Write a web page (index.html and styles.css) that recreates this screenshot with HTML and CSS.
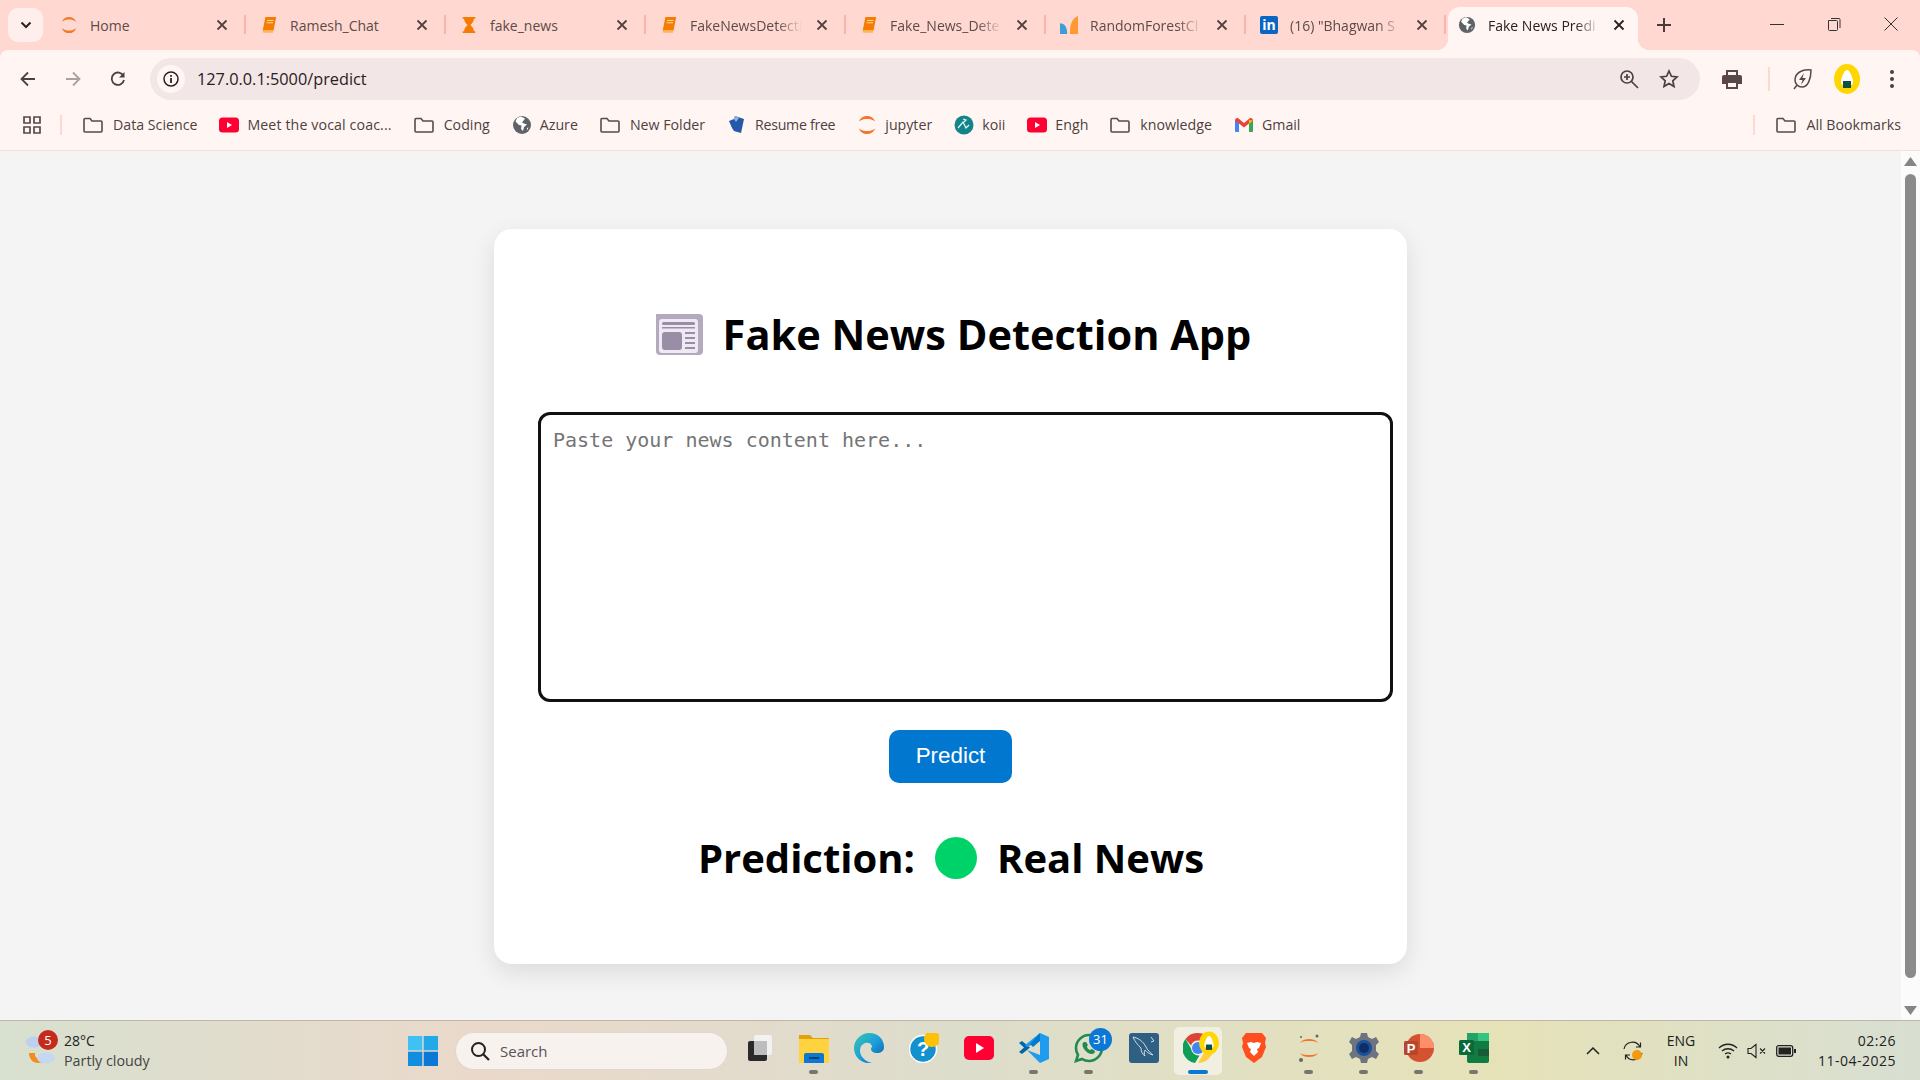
FILE: index.html
```html
<!DOCTYPE html>
<html>
<head>
  <meta charset="utf-8" />
  <title>Fake News Prediction</title>
  <link rel="stylesheet" href="styles.css">
</head>
<body>
  <svg class="defs" width="0" height="0">
    <symbol id="i-jupyter" viewBox="0 0 20 20">
      <path fill="#f37726" d="M2 6.500C3.500 2.500 6.500 1 10 1s6.500 1.500 8 5.500C15.500 4.500 13 4 10 4S4.500 4.500 2 6.500zM2 13.500C4.500 15.500 7 16 10 16s5.500-.5 8-2.500C16.500 17.500 13.500 19 10 19s-6.500-1.500-8-5.500z"/>
    </symbol>
    <symbol id="i-book" viewBox="0 0 20 20">
      <path fill="#f57c00" d="M6 1h12l-3 15H3z"/>
      <path fill="#ffb74d" d="M3 16h12l-.5 2.500H4a2 2 0 0 1-1-2.500z"/>
      <path fill="#ffd9a8" d="M8 4.500h7l-.2 1H7.800zM7.500 7h7l-.2 1h-7z"/>
    </symbol>
    <symbol id="i-hourglass" viewBox="0 0 20 20">
      <path fill="#f57c00" d="M3 1h14v2h-1.500c0 3-2 5-4 7 2 2 4 4 4 7H17v2H3v-2h1.500c0-3 2-5 4-7-2-2-4-4-4-7H3z"/>
    </symbol>
    <symbol id="i-forest" viewBox="0 0 20 20">
      <path fill="#3b9fd6" d="M0 8c5 0 8 4 8 12H0z"/>
      <path fill="#ff9a32" d="M20 0v20h-9c0-8 1-17 9-20z"/>
    </symbol>
    <symbol id="i-globe" viewBox="0 0 20 20">
      <circle cx="10" cy="10" r="9" fill="#5f6368"/>
      <path fill="#fff" d="M9 1.500 5 3 3.500 6.500 7 10l2.500.5L9 14l2 2 1-4 3-2.500-3-1-2-1 2-2.500 1-1.500zM15 13l1.500-.5L15 15.500z"/>
    </symbol>
    <symbol id="i-yt" viewBox="0 0 20 20">
      <rect y="2.500" width="20" height="15" rx="3.500" fill="#ff0033"/>
      <path fill="#fff" d="M8 7l5 3-5 3z"/>
    </symbol>
    <symbol id="i-folder" viewBox="0 0 20 20">
      <path fill="none" stroke="#5a4a48" stroke-width="1.600" d="M1 4.500a1 1 0 0 1 1-1h5l2 2.500h9a1 1 0 0 1 1 1v9a1 1 0 0 1-1 1H2a1 1 0 0 1-1-1z"/>
    </symbol>
    <symbol id="i-resume" viewBox="0 0 20 20">
      <path fill="#2458a8" d="M2 6l5-2 1-3 9 3-3 14-7-2-2-3z"/>
      <path fill="#8fb0e0" d="M8 1l-1 3 2 3 3-4z"/>
    </symbol>
    <symbol id="i-koii" viewBox="0 0 20 20">
      <circle cx="10" cy="10" r="9.500" fill="#12848a"/>
      <path fill="none" stroke="#e6fbfb" stroke-width="1.200" d="M4 13l5-6 3 6 3-3M9 4l3 1-2 2"/>
    </symbol>
    <symbol id="i-gmail" viewBox="0 0 20 20">
      <path fill="#4285f4" d="M1 5h4v12H2a1 1 0 0 1-1-1z"/>
      <path fill="#34a853" d="M15 5h4v11a1 1 0 0 1-1 1h-3z"/>
      <path fill="#ea4335" d="M1 5.500C1 3.500 3 2.500 4.500 3.500L10 8l5.500-4.500c1.500-1 3.500 0 3.500 2l-4 3-5 4-5-4-4-3z"/>
      <path fill="#fbbc04" d="M15 5l4 .5-4 3.500z"/>
    </symbol>
    <symbol id="i-close" viewBox="0 0 12 12">
      <path fill="none" stroke="currentColor" stroke-width="1.800" d="M1.500 1.500l9 9M10.500 1.500l-9 9"/>
    </symbol>
    <symbol id="i-onigiri" viewBox="0 0 26 30">
      <ellipse cx="13" cy="15" rx="13" ry="15" fill="#ffd600"/>
      <path fill="#fff" d="M13 6c2 0 3 2 5 7s2 9-5 9-7-4-5-9 3-7 5-7z"/>
      <rect x="9" y="17" width="8" height="7" fill="#0f4f48"/>
    </symbol>
  </svg>

  <div class="tabstrip">
    <button class="tab-menu">
      <svg width="12" height="8" viewBox="0 0 12 8"><path fill="none" stroke="#2b2020" stroke-width="2" d="M1.500 1.500 6 6l4.500-4.500"/></svg>
    </button>
    <div class="tab"><svg class="fav"><use href="#i-jupyter"/></svg><span class="tab-title">Home</span><svg class="tab-x"><use href="#i-close"/></svg></div>
    <div class="tab"><svg class="fav"><use href="#i-book"/></svg><span class="tab-title">Ramesh_Chat</span><svg class="tab-x"><use href="#i-close"/></svg></div>
    <div class="tab"><svg class="fav"><use href="#i-hourglass"/></svg><span class="tab-title">fake_news</span><svg class="tab-x"><use href="#i-close"/></svg></div>
    <div class="tab"><svg class="fav"><use href="#i-book"/></svg><span class="tab-title fade">FakeNewsDetecti</span><svg class="tab-x"><use href="#i-close"/></svg></div>
    <div class="tab"><svg class="fav"><use href="#i-book"/></svg><span class="tab-title fade">Fake_News_Dete</span><svg class="tab-x"><use href="#i-close"/></svg></div>
    <div class="tab"><svg class="fav"><use href="#i-forest"/></svg><span class="tab-title fade">RandomForestCl</span><svg class="tab-x"><use href="#i-close"/></svg></div>
    <div class="tab"><span class="fav linkedin">in</span><span class="tab-title fade">(16) "Bhagwan S</span><svg class="tab-x"><use href="#i-close"/></svg></div>
    <div class="tab active"><svg class="fav"><use href="#i-globe"/></svg><span class="tab-title fade">Fake News Predi</span><svg class="tab-x"><use href="#i-close"/></svg></div>
    <svg class="new-tab" width="14" height="14" viewBox="0 0 14 14"><path fill="none" stroke="#4a3a38" stroke-width="2" d="M7 0v14M0 7h14"/></svg>
    <div class="win-btns">
      <div class="win-btn"><svg width="14" height="14" viewBox="0 0 14 14"><path stroke="#333" d="M0 7.500h14"/></svg></div>
      <div class="win-btn"><svg width="14" height="14" viewBox="0 0 14 14"><path fill="none" stroke="#333" d="M1.500 3.500h8a1 1 0 0 1 1 1v8a1 1 0 0 1-1 1h-7a1 1 0 0 1-1-1zM4 1.500h8a1 1 0 0 1 1 1V11"/></svg></div>
      <div class="win-btn"><svg width="14" height="14" viewBox="0 0 14 14"><path stroke="#333" d="M.5.500l13 13M13.500.500l-13 13"/></svg></div>
    </div>
  </div>

  <div class="toolbar">
    <div class="tool-btn"><svg width="16" height="16" viewBox="0 0 16 16"><path fill="none" stroke="#4f3f3d" stroke-width="1.800" d="M15 8H2M8 1.500 1.500 8 8 14.500"/></svg></div>
    <div class="tool-btn"><svg width="16" height="16" viewBox="0 0 16 16"><path fill="none" stroke="#ad9f9d" stroke-width="1.800" d="M1 8h13M8 1.500 14.500 8 8 14.500"/></svg></div>
    <div class="tool-btn"><svg width="16" height="16" viewBox="0 0 16 16"><path fill="none" stroke="#4f3f3d" stroke-width="1.800" d="M13.500 5A6.200 6.200 0 1 0 14 9"/><path fill="#4f3f3d" d="M14.500 1v5.500H9z"/></svg></div>
    <div class="urlbar">
      <div class="site-info"><svg width="16" height="16" viewBox="0 0 16 16"><circle cx="8" cy="8" r="7" fill="none" stroke="#2b2020" stroke-width="1.500"/><path stroke="#2b2020" stroke-width="1.800" d="M8 7v5M8 4v1.800"/></svg></div>
      <span class="url-text">127.0.0.1:5000/predict</span>
      <svg class="url-zoom" width="20" height="20" viewBox="0 0 20 20"><circle cx="8" cy="8" r="6" fill="none" stroke="#4f3f3d" stroke-width="1.700"/><path stroke="#4f3f3d" stroke-width="1.700" d="M12.500 12.500 19 19M8 5v6M5 8h6"/></svg>
      <svg class="url-star" width="20" height="20" viewBox="0 0 20 20"><path fill="none" stroke="#4f3f3d" stroke-width="1.700" d="M10 2l2.400 5.300 5.600.6-4.200 3.900 1.200 5.700L10 14.600 5 17.500l1.200-5.700L2 7.900l5.600-.6z"/></svg>
    </div>
    <div class="tool-btn print"><svg width="22" height="20" viewBox="0 0 22 20"><path fill="#5a4846" d="M5 1h12v5h-2V3H7v3H5zM3 6h16a2 2 0 0 1 2 2v7h-4v-2H5v2H1V8a2 2 0 0 1 2-2z"/><path fill="none" stroke="#5a4846" stroke-width="2" d="M6 13h10v6H6z"/></svg></div>
    <div class="tool-sep"></div>
    <div class="tool-btn"><svg width="20" height="22" viewBox="0 0 20 22"><path fill="none" stroke="#5a4846" stroke-width="1.500" d="M19 2C10 1 3 5 3 12c0 4 3 7 7 7 6 0 9-8 9-17zM5 17l-3 4"/><path fill="#5a4846" d="M12 5 7 12h3.500L9 17l5-7h-3.500z"/></svg></div>
    <div class="tool-btn"><svg width="26" height="30"><use href="#i-onigiri"/></svg></div>
    <div class="tool-btn"><svg width="4" height="20" viewBox="0 0 4 20"><circle cx="2" cy="3" r="2" fill="#4f3f3d"/><circle cx="2" cy="10" r="2" fill="#4f3f3d"/><circle cx="2" cy="17" r="2" fill="#4f3f3d"/></svg></div>
  </div>

  <div class="bookmarks">
    <svg class="apps" width="20" height="18" viewBox="0 0 20 18"><path fill="none" stroke="#5a4846" stroke-width="1.700" d="M2 1h6v6H2zM12 1h6v6h-6zM2 11h6v6H2zM12 11h6v6h-6z"/></svg>
    <div class="bm-sep"></div>
    <div class="bm folder"><svg class="bm-ico"><use href="#i-folder"/></svg>Data Science</div>
    <div class="bm loose"><svg class="bm-ico"><use href="#i-yt"/></svg>Meet the vocal coac...</div>
    <div class="bm folder"><svg class="bm-ico"><use href="#i-folder"/></svg>Coding</div>
    <div class="bm"><svg class="bm-ico"><use href="#i-globe"/></svg>Azure</div>
    <div class="bm folder"><svg class="bm-ico"><use href="#i-folder"/></svg>New Folder</div>
    <div class="bm tight"><svg class="bm-ico"><use href="#i-resume"/></svg>Resume free</div>
    <div class="bm"><svg class="bm-ico"><use href="#i-jupyter"/></svg>jupyter</div>
    <div class="bm"><svg class="bm-ico"><use href="#i-koii"/></svg>koii</div>
    <div class="bm"><svg class="bm-ico"><use href="#i-yt"/></svg>Engh</div>
    <div class="bm folder"><svg class="bm-ico"><use href="#i-folder"/></svg>knowledge</div>
    <div class="bm"><svg class="bm-ico"><use href="#i-gmail"/></svg>Gmail</div>
    <div class="bm-all">
      <div class="bm-sep"></div>
      <div class="bm folder"><svg class="bm-ico"><use href="#i-folder"/></svg>All Bookmarks</div>
    </div>
  </div>

  <div class="viewport">
    <main class="page">
      <div class="card">
        <h1 class="title">
          <svg class="news-ico" viewBox="0 0 47 41">
            <path fill="#b5a9bd" d="M4 0h39a4 4 0 0 1 4 4v33a4 4 0 0 1-4 4H4a4 4 0 0 1-4-4V8a4 4 0 0 1 4-8z"/>
            <rect x="3" y="5" width="39" height="34" rx="3" fill="#efe9f3"/>
            <rect x="6" y="8" width="33" height="3" rx="1.500" fill="#9a8ea6"/>
            <rect x="6" y="13" width="33" height="1.500" fill="#9a8ea6"/>
            <rect x="6" y="18" width="20" height="18" rx="3" fill="#9a8ea6"/>
            <path stroke="#9a8ea6" stroke-width="2" d="M29 19h10M29 24h10M29 29h10M29 34h10"/>
          </svg>
          <span>Fake News Detection App</span>
        </h1>
        <textarea class="news-input" placeholder="Paste your news content here..."></textarea>
        <button class="predict-btn">Predict</button>
        <h2 class="result">
          <span>Prediction:</span>
          <span class="dot"></span>
          <span>Real News</span>
        </h2>
      </div>
    </main>
    <div class="scrollbar">
      <svg width="13" height="9" viewBox="0 0 13 9"><path fill="#858585" d="M6.500 0 13 9H0z"/></svg>
      <div class="thumb"></div>
      <svg width="13" height="9" viewBox="0 0 13 9"><path fill="#858585" d="M6.500 9 0 0h13z"/></svg>
    </div>
  </div>

  <div class="taskbar">
    <div class="weather">
      <div class="weather-ico">
        <svg width="30" height="34" viewBox="0 0 30 34">
          <ellipse cx="8" cy="8" rx="8" ry="5.500" fill="#bcd0ef"/>
          <path fill="#f28c1e" d="M3 19c0 6 4 10 9 10 3 0 6-1 7-4-6 1-11-1-10-6z"/>
          <ellipse cx="20" cy="24" rx="9" ry="5.500" fill="#c6d7f2"/>
        </svg>
        <span class="weather-badge">5</span>
      </div>
      <div class="weather-text">
        <div class="temp">28°C</div>
        <div class="cond">Partly cloudy</div>
      </div>
    </div>

    <div class="start">
      <svg width="30" height="30" viewBox="0 0 30 30">
        <rect width="14.300" height="14.300" fill="#3fc1f3"/>
        <rect x="15.700" width="14.300" height="14.300" fill="#23a8ea"/>
        <rect y="15.700" width="14.300" height="14.300" fill="#138ede"/>
        <rect x="15.700" y="15.700" width="14.300" height="14.300" fill="#0a78d4"/>
      </svg>
    </div>
    <div class="search">
      <svg width="20" height="20" viewBox="0 0 20 20"><circle cx="8.500" cy="8.500" r="6.500" fill="none" stroke="#222" stroke-width="2"/><path stroke="#222" stroke-width="2.200" d="M13 13l6 6"/></svg>
      <span>Search</span>
    </div>

    <div class="task-item">
      <svg class="app" viewBox="0 0 30 30">
        <rect x="10" y="2" width="18" height="20" rx="2" fill="#f2f2f2"/>
        <rect x="4" y="8" width="19" height="20" rx="2" fill="#2a2a2a"/>
        <rect x="10" y="8" width="13" height="14" fill="#bdbdbd"/>
      </svg>
    </div>
    <div class="task-item open">
      <svg class="app" viewBox="0 0 30 30">
        <path fill="#e3a008" d="M0 2h11l3 3h16v6H0z"/>
        <rect y="6" width="30" height="24" fill="#ffd23f"/>
        <path fill="#0a78d4" d="M5 22a2 2 0 0 1 2-2h16a2 2 0 0 1 2 2v8H5z"/>
        <rect x="10" y="24" width="10" height="2" fill="#05406f"/>
      </svg>
      <i class="pill"></i>
    </div>
    <div class="task-item">
      <svg class="app" viewBox="0 0 30 30">
        <defs>
          <linearGradient id="edge" x1="0" y1="0" x2="1" y2="1"><stop offset="0" stop-color="#3ac6a8"/><stop offset=".5" stop-color="#1ba0dc"/><stop offset="1" stop-color="#0c59a4"/></linearGradient>
        </defs>
        <path fill="url(#edge)" d="M15 0c9 0 15 6 15 14 0 4-3 6-7 6-4 0-6-2-6-4 0-1 1-2 1-3-1-3-4-4-7-3-5 2-6 7-4 12 2 4 6 7 11 8-1 0-2 0-3 0C6 30 0 23 0 15S7 0 15 0z"/>
      </svg>
    </div>
    <div class="task-item">
      <svg class="app" viewBox="0 0 30 30">
        <circle cx="14" cy="16" r="13.500" fill="#1391cf" stroke="#fff" stroke-width="1.500"/>
        <text x="14" y="23" text-anchor="middle" class="help-q">?</text>
        <circle cx="23" cy="6" r="8" fill="#ffc107"/>
      </svg>
    </div>
    <div class="task-item">
      <svg class="app" viewBox="0 0 30 30"><rect y="3" width="30" height="24" rx="5" fill="#ff0033"/><path fill="#fff" d="M12 10l8 5-8 5z"/></svg>
    </div>
    <div class="task-item open">
      <svg class="app" viewBox="0 0 30 30">
        <path fill="#0065a9" d="M0 10l3-2 8 6.500L8 17l-5 4-3-2 5-4.500z"/>
        <path fill="#1f9cf0" d="M21 0l9 4v22l-9 4-13-13L21 22V8L8 14 6 12z"/>
        <path fill="#007acc" d="M21 0l-10 11 3 3 7-6z"/>
      </svg>
      <i class="pill"></i>
    </div>
    <div class="task-item open">
      <svg class="app" viewBox="0 0 30 30">
        <path fill="none" stroke="#1f8a53" stroke-width="2.600" d="M15 2C8 2 2 8 2 15c0 2.500.7 5 2 7l-2 6 6-2c2 1.300 4.500 2 7 2 7 0 13-6 13-13S22 2 15 2z"/>
        <path fill="#1f8a53" d="M10 9c-2 1-2 4 0 7s5 5 8 5c2 0 3-2 3-3l-3-2-2 1c-2-1-3-2-3-4l1-1-2-3z"/>
      </svg>
      <span class="app-badge">31</span>
      <i class="pill"></i>
    </div>
    <div class="task-item">
      <svg class="app" viewBox="0 0 30 30">
        <rect width="30" height="30" rx="3" fill="#2f5f83"/>
        <path fill="none" stroke="#cfdce6" stroke-width="1" d="M4 4c5 1 10 4 13 10 2 4 5 6 7 8-4-1-6-3-8-5-1 2-1 4 0 6-3-2-4-5-4-8-3-3-6-6-8-11zM22 4l3 4-3 1"/>
      </svg>
    </div>
    <div class="task-item current">
      <svg class="app" viewBox="0 0 30 30">
        <path fill="#db4437" d="M15 0a15 15 0 0 1 13 7.500H15a7.500 7.500 0 0 0-7 5L2.500 6A15 15 0 0 1 15 0z"/>
        <path fill="#0f9d58" d="M2.500 6 8 15.500a7.500 7.500 0 0 0 8.500 7L12 30A15 15 0 0 1 2.500 6z"/>
        <path fill="#ffcd40" d="M28 7.500A15 15 0 0 1 15 30l6.500-11a7.500 7.500 0 0 0 0-11.500z"/>
        <circle cx="15" cy="15" r="6" fill="#4285f4"/>
      </svg>
      <svg class="app-avatar"><use href="#i-onigiri"/></svg>
      <i class="pill"></i>
    </div>
    <div class="task-item">
      <svg class="app" viewBox="0 0 30 30">
        <path fill="#ff4f1f" d="M7 0h16l4 5-1 5 1 4-4 10-8 6-8-6L3 14l1-4-1-5z"/>
        <path fill="#fff" d="M8 10l4-1 3 1 3-1 4 1-2 5-2 1 1 3-4 4-4-4 1-3-2-1z"/>
      </svg>
    </div>
    <div class="task-item open">
      <svg class="app" viewBox="0 0 30 30">
        <path fill="#f37726" d="M6 10c2-3 5-4 9-4s7 1 9 4c-3-2-6-2-9-2s-6 0-9 2zM6 20c3 2 6 2 9 2s6 0 9-2c-2 3-5 4-9 4s-7-1-9-4z"/>
        <circle cx="23" cy="3" r="1.500" fill="#666"/><circle cx="7" cy="4" r="1" fill="#666"/><circle cx="7" cy="27" r="2" fill="#666"/>
      </svg>
      <i class="pill"></i>
    </div>
    <div class="task-item open">
      <svg class="app" viewBox="0 0 30 30">
        <path fill="#6d7480" d="M12 0h6l1 4 4 2 4-2 3 5-3 3v6l3 3-3 5-4-2-4 2-1 4h-6l-1-4-4-2-4 2-3-5 3-3v-6L0 9l3-5 4 2 4-2z"/>
        <circle cx="15" cy="15" r="8" fill="#1c4f9c"/><circle cx="15" cy="15" r="5" fill="#0e2f66"/>
      </svg>
      <i class="pill"></i>
    </div>
    <div class="task-item open">
      <svg class="app" viewBox="0 0 30 30">
        <circle cx="16" cy="15" r="14" fill="#d35230"/>
        <path fill="#ff8f6b" d="M16 1a14 14 0 0 1 14 14H16z"/>
        <rect y="8" width="14" height="14" rx="1.500" fill="#b7472a"/>
        <text x="7" y="20" text-anchor="middle" class="tile-letter">P</text>
      </svg>
      <i class="pill"></i>
    </div>
    <div class="task-item open">
      <svg class="app" viewBox="0 0 30 30">
        <rect x="8" width="22" height="30" rx="2" fill="#107c41"/>
        <rect x="19" width="11" height="8" fill="#33c481"/>
        <rect x="8" width="11" height="8" fill="#21a366"/>
        <rect x="19" y="16" width="11" height="7" fill="#185c37"/>
        <rect y="7" width="15" height="15" rx="1.500" fill="#0b6a3a"/>
        <text x="7.500" y="19" text-anchor="middle" class="tile-letter">X</text>
      </svg>
      <i class="pill"></i>
    </div>

    <div class="tray">
      <div class="tray-chevron"><svg width="14" height="8" viewBox="0 0 14 8"><path fill="none" stroke="#222" stroke-width="1.500" d="M1 7l6-6 6 6"/></svg></div>
      <div class="tray-sync">
        <svg width="22" height="22" viewBox="0 0 22 22"><path fill="none" stroke="#222" stroke-width="1.200" d="M2 9a8.500 8.500 0 0 1 16-2M20 13a8.500 8.500 0 0 1-16 2M18.500 2.500V7H14M3.500 19.500V15H8"/><circle cx="15" cy="15" r="5" fill="#f59a0c"/></svg>
      </div>
      <div class="tray-lang">ENG<br>IN</div>
      <div class="tray-ico"><svg width="20" height="16" viewBox="0 0 20 16"><path fill="none" stroke="#222" stroke-width="1.300" d="M1 5c5-5 13-5 18 0M4 8c3.500-3 8.500-3 12 0M7 11c2-1.500 4-1.500 6 0"/><circle cx="10" cy="14" r="1.500" fill="#222"/></svg></div>
      <div class="tray-ico"><svg width="20" height="16" viewBox="0 0 20 16"><path fill="none" stroke="#222" stroke-width="1.100" d="M1 5.500h3L9 1.500v13L4 10.500H1zM13 5.500l5 5M18 5.500l-5 5"/></svg></div>
      <div class="tray-ico"><svg width="20" height="12" viewBox="0 0 20 12"><rect x=".7" y=".7" width="16" height="10.600" rx="2" fill="none" stroke="#222" stroke-width="1.300"/><rect x="2.500" y="2.500" width="12.500" height="7" fill="#222"/><rect x="18" y="4" width="2" height="4" fill="#222"/></svg></div>
      <div class="tray-clock">02:26<br>11-04-2025</div>
    </div>
  </div>
</body>
</html>
```

FILE: styles.css
```css
* {
  box-sizing: border-box;
}

html, body {
  margin: 0;
  height: 1080px;
  overflow: hidden;
}

body {
  font-family: "Open Sans", "Noto Sans", sans-serif;
  background-color: #ffd8d2;
  color: #000;
  display: flex;
  flex-direction: column;
}

.defs {
  position: absolute;
}

/* tab strip */
.tabstrip {
  height: 50px;
  background-color: #ffd8d2;
  display: flex;
  align-items: flex-end;
  flex-shrink: 0;
}

.tab-menu {
  width: 35px;
  height: 34px;
  margin: 0 3px 8px 8px;
  padding: 0;
  border: 0;
  border-radius: 10px;
  background-color: #ffefec;
  display: flex;
  align-items: center;
  justify-content: center;
}

.tab {
  width: 200px;
  height: 42px;
  padding: 0 0 8px 14px;
  display: flex;
  align-items: center;
  color: #5e4a48;
  font-size: 14px;
  position: relative;
}

.tab::after {
  content: "";
  position: absolute;
  right: 0;
  top: 7px;
  height: 19px;
  width: 2px;
  background-color: #fbb4aa;
}

.fav {
  width: 18px;
  height: 18px;
  flex-shrink: 0;
  margin-right: 12px;
}

.linkedin {
  background-color: #0a66c2;
  border-radius: 2px;
  color: #fff;
  font-weight: 700;
  font-size: 14px;
  line-height: 18px;
  text-align: center;
}

.tab-title {
  width: 112px;
  white-space: nowrap;
  overflow: hidden;
}

.tab-title.fade {
  -webkit-mask-image: linear-gradient(to right, #000 78%, transparent 100%);
  mask-image: linear-gradient(to right, #000 78%, transparent 100%);
}

.tab-x {
  width: 12px;
  height: 12px;
  margin-left: 14px;
  color: #54423f;
}

.tab.active {
  width: 190px;
  height: 43px;
  margin-left: 2px;
  padding: 0 0 7px 10px;
  background-color: #fff6f4;
  border-radius: 12px 12px 0 0;
  color: #2b2020;
}

.tab.active::before,
.tab.active::after {
  content: "";
  position: absolute;
  top: auto;
  bottom: 0;
  width: 12px;
  height: 12px;
}

.tab.active::before {
  left: -12px;
  background: radial-gradient(circle at 0 0, #ffd8d2 12px, #fff6f4 12.500px);
}

.tab.active::after {
  right: -12px;
  background: radial-gradient(circle at 100% 0, #ffd8d2 12px, #fff6f4 12.500px);
}

.tab.active .tab-x {
  margin-left: 13px;
  color: #2b2020;
}

.new-tab {
  margin: 0 0 18px 19px;
}

.win-btns {
  margin-left: auto;
  align-self: stretch;
  display: flex;
  padding-right: 1px;
}

.win-btn {
  width: 57px;
  display: flex;
  align-items: center;
  justify-content: center;
  padding-bottom: 2px;
}

/* toolbar */
.toolbar {
  height: 55px;
  padding: 8px 10px 5px 10px;
  background-color: #fff6f4;
  border-radius: 8px 8px 0 0;
  display: flex;
  align-items: center;
  gap: 9px;
  flex-shrink: 0;
}

.tool-btn {
  width: 36px;
  height: 36px;
  flex-shrink: 0;
  display: flex;
  align-items: center;
  justify-content: center;
}

.urlbar {
  flex: 1;
  height: 42px;
  margin-left: 5px;
  padding: 0 21px 0 7px;
  border-radius: 21px;
  background-color: #f2e6e7;
  display: flex;
  align-items: center;
}

.site-info {
  width: 28px;
  height: 28px;
  border-radius: 50%;
  background-color: #fff6f4;
  display: flex;
  align-items: center;
  justify-content: center;
}

.url-text {
  margin-left: 12px;
  font-size: 16.300px;
  color: #2b2020;
}

.url-zoom {
  margin-left: auto;
}

.url-star {
  margin-left: 20px;
}

.print {
  margin-left: 5px;
}

.tool-sep {
  width: 2px;
  height: 24px;
  margin: 0 5px 0 9px;
  background-color: #ffd8d2;
}

/* bookmarks bar */
.bookmarks {
  height: 46px;
  padding: 0 19px 6px 22px;
  background-color: #fff6f4;
  border-bottom: 1px solid #f8dcd5;
  display: flex;
  align-items: center;
  flex-shrink: 0;
  font-size: 14.200px;
  color: #4f3f3d;
}

.apps {
  flex-shrink: 0;
}

.bm-sep {
  width: 2px;
  height: 20px;
  margin: 0 21px 0 18px;
  background-color: #ffd8d2;
}

.bm {
  display: flex;
  align-items: center;
  gap: 8px;
  margin-right: 22px;
  white-space: nowrap;
}

.bm.folder {
  gap: 10px;
}

.bm.loose {
  letter-spacing: 0.120px;
}

.bm.tight {
  letter-spacing: -0.300px;
}

.bm-ico {
  width: 20px;
  height: 20px;
}

.bm-all {
  margin-left: auto;
  display: flex;
  align-items: center;
}

.bm-all .bm {
  margin-right: 0;
}

/* page */
.viewport {
  flex: 1;
  display: flex;
  min-height: 0;
}

.page {
  flex: 1;
  padding-top: 78px;
  background-color: #f4f4f4;
}

.card {
  width: 913px;
  margin: 0 auto;
  padding: 44px;
  background-color: #fff;
  border-radius: 18px;
  box-shadow: 0 8px 24px rgba(0, 0, 0, 0.1);
  text-align: center;
}

.title {
  height: 56px;
  margin: 33px 0 50px;
  font-size: 41.500px;
  line-height: 56px;
  font-weight: 700;
  display: flex;
  align-items: center;
  justify-content: center;
  gap: 20px;
}

.news-ico {
  width: 47px;
  height: 41px;
  margin-left: 6px;
}

.news-input {
  display: block;
  box-sizing: content-box;
  width: 100%;
  height: 259px;
  margin: 0 0 28px;
  padding: 13px 12px 12px;
  border: 3px solid #111;
  border-radius: 12px;
  background-color: #fff;
  font-family: "DejaVu Sans Mono", monospace;
  font-size: 20px;
  resize: none;
}

.news-input::placeholder {
  color: #757575;
}

.predict-btn {
  width: 123px;
  height: 53px;
  padding: 0 0 2px;
  border: 0;
  border-radius: 10px;
  background-color: #0277cf;
  color: #fff;
  font-family: "Liberation Sans", Arial, sans-serif;
  font-size: 22.400px;
}

.result {
  height: 56px;
  margin: 47px 0 34px;
  padding-left: 1px;
  font-size: 40px;
  line-height: 56px;
  font-weight: 700;
  display: flex;
  align-items: center;
  justify-content: center;
  gap: 20px;
}

.dot {
  width: 42px;
  height: 42px;
  border-radius: 50%;
  background-color: #00d26a;
}

.scrollbar {
  width: 19px;
  padding: 6px 0 5px;
  background-color: #fbfbfb;
  display: flex;
  flex-direction: column;
  align-items: center;
}

.thumb {
  flex: 1;
  width: 11px;
  margin: 8px 0 28px;
  border-radius: 6px;
  background-color: #8a8a8a;
}

/* taskbar */
.taskbar {
  height: 60px;
  border-top: 1px solid #bfb8a8;
  background: linear-gradient(to right, #d8e0cf 0%, #ead9cb 25%, #ddddcc 50%, #e6e2b8 78%, #d8dfd2 100%);
  display: flex;
  align-items: center;
  flex-shrink: 0;
  font-size: 14px;
  color: #222;
}

.weather {
  width: 396px;
  padding-left: 26px;
  display: flex;
  align-items: center;
  gap: 8px;
}

.weather-ico {
  position: relative;
  width: 30px;
  height: 34px;
}

.weather-badge {
  position: absolute;
  top: -4px;
  left: 12px;
  width: 20px;
  height: 20px;
  border-radius: 50%;
  background-color: #c42b1c;
  color: #fff;
  font-size: 13px;
  line-height: 20px;
  text-align: center;
}

.weather-text {
  line-height: 20px;
}

.cond {
  color: #444;
  font-size: 14.300px;
}

.start {
  width: 54px;
  display: flex;
  justify-content: center;
}

.search {
  width: 273px;
  height: 38px;
  margin-left: 5px;
  padding-left: 14px;
  border-radius: 19px;
  border: 1px solid #ded8d0;
  background-color: #f7f2ee;
  color: #555;
  font-size: 15px;
  display: flex;
  align-items: center;
  gap: 10px;
}

.task-item {
  position: relative;
  width: 55px;
  height: 48px;
  display: flex;
  align-items: center;
  justify-content: center;
  padding-bottom: 5px;
}

.search + .task-item {
  margin-left: 3px;
}

.app {
  width: 30px;
  height: 30px;
}

.help-q {
  fill: #fff;
  font-family: "Liberation Sans", sans-serif;
  font-size: 20px;
  font-weight: 700;
}

.tile-letter {
  fill: #fff;
  font-family: "Liberation Sans", sans-serif;
  font-size: 13px;
  font-weight: 700;
}

.pill {
  position: absolute;
  bottom: 1px;
  left: 23px;
  width: 9px;
  height: 4px;
  border-radius: 2px;
  background-color: #76766f;
}

.app-badge {
  position: absolute;
  top: 1px;
  left: 28px;
  width: 23px;
  height: 23px;
  border-radius: 50%;
  background-color: #0a78d4;
  color: #fff;
  font-size: 13px;
  line-height: 23px;
  text-align: center;
}

.task-item.current {
  background-color: rgba(255, 255, 255, 0.5);
  border-radius: 5px;
  width: 48px;
  margin: 0 4px 0 3px;
}

.task-item.current .pill {
  left: 14px;
  width: 20px;
  background-color: #0a78d4;
}

.app-avatar {
  position: absolute;
  top: 4px;
  left: 25px;
  width: 20px;
  height: 24px;
}

.tray {
  margin-left: auto;
  margin-right: 24px;
  display: flex;
  align-items: center;
}

.tray-chevron,
.tray-sync,
.tray-ico {
  display: flex;
  justify-content: center;
}

.tray-chevron {
  width: 30px;
}

.tray-sync {
  width: 30px;
  margin-left: 10px;
}

.tray-lang {
  width: 40px;
  margin: 0 15px 0 13px;
  text-align: center;
  line-height: 20px;
}

.tray-ico {
  width: 24px;
  margin-right: 5px;
}

.tray-clock {
  width: 90px;
  margin-left: 3px;
  text-align: right;
  line-height: 20px;
  letter-spacing: 0.500px;
}
```
